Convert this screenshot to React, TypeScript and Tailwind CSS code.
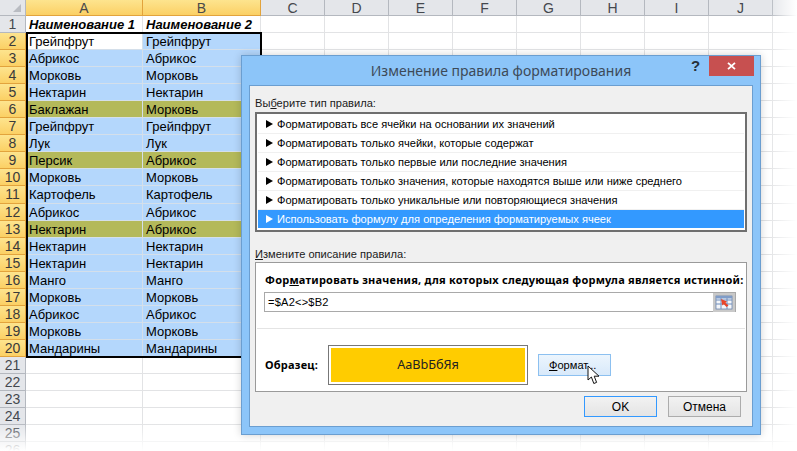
import React from "react";

const rowsData: [string, string, boolean][] = [
  ["Грейпфрут", "Грейпфрут", false],
  ["Абрикос", "Абрикос", false],
  ["Морковь", "Морковь", false],
  ["Нектарин", "Нектарин", false],
  ["Баклажан", "Морковь", true],
  ["Грейпфрут", "Грейпфрут", false],
  ["Лук", "Лук", false],
  ["Персик", "Абрикос", true],
  ["Морковь", "Морковь", false],
  ["Картофель", "Картофель", false],
  ["Абрикос", "Абрикос", false],
  ["Нектарин", "Абрикос", true],
  ["Нектарин", "Нектарин", false],
  ["Нектарин", "Нектарин", false],
  ["Манго", "Манго", false],
  ["Морковь", "Морковь", false],
  ["Абрикос", "Абрикос", false],
  ["Морковь", "Морковь", false],
  ["Мандарины", "Мандарины", false],
];

const plainCols = ["C", "D", "E", "F", "G", "H", "I", "J"];
const ruleRows = [
  "Форматировать все ячейки на основании их значений",
  "Форматировать только ячейки, которые содержат",
  "Форматировать только первые или последние значения",
  "Форматировать только значения, которые находятся выше или ниже среднего",
  "Форматировать только уникальные или повторяющиеся значения",
];

function RowHead({ n, active }: { n: number; active: boolean }) {
  return (
    <div
      className={
        active
          ? "h-full w-[26px] shrink-0 border-r border-b border-[#e2a33c] bg-gradient-to-b from-[#fde48e] to-[#fbd064] text-center text-[14px] leading-[17px] text-[#3a3a3a]"
          : "h-full w-[26px] shrink-0 border-r border-b border-[#b4b8bf] bg-[#e4e6ea] text-center text-[14px] leading-[17px] text-[#44484e]"
      }
    >
      {n}
    </div>
  );
}

function PlainCells() {
  return (
    <>
      {plainCols.map((c) => (
        <div key={c} className="h-full w-[64px] shrink-0 border-r border-b border-[#e2e3e5]" />
      ))}
      <div className="h-full flex-1 border-b border-[#e2e3e5]" />
    </>
  );
}

function Sheet() {
  return (
    <div className="flex h-[451px] w-[797px] flex-col overflow-hidden bg-white font-['Liberation_Sans',sans-serif]">
      <div className="flex h-[16px] shrink-0">
        <div className="relative h-full w-[26px] shrink-0 border-r border-b border-[#b4b8bf] bg-[#e4e6ea]">
          <div className="absolute right-[4px] bottom-[3px] h-0 w-0 border-b-[8px] border-l-[8px] border-b-[#b9bcc2] border-l-transparent" />
        </div>
        <div className="h-full w-[117px] shrink-0 border-r border-b border-[#e2a33c] bg-gradient-to-b from-[#fde48e] to-[#fbd064] text-center text-[14px] leading-[16px] text-[#4a4a4a]">A</div>
        <div className="h-full w-[118px] shrink-0 border-r border-b border-[#e2a33c] bg-gradient-to-b from-[#fde48e] to-[#fbd064] text-center text-[14px] leading-[16px] text-[#4a4a4a]">B</div>
        {plainCols.map((c) => (
          <div key={c} className="h-full w-[64px] shrink-0 border-r border-b border-[#b4b8bf] bg-[#e4e6ea] text-center text-[14px] leading-[16px] text-[#44484e]">{c}</div>
        ))}
        <div className="h-full flex-1 border-b border-[#b4b8bf] bg-[#e4e6ea]" />
      </div>

      <div className="flex h-[17.05px] shrink-0">
        <RowHead n={1} active={false} />
        <div className="h-full w-[117px] shrink-0 border-r border-[#e2e3e5] pl-[3px] text-[13px] leading-[18px] font-bold text-black italic">Наименование 1</div>
        <div className="h-full w-[118px] shrink-0 border-r border-[#e2e3e5] pl-[3px] text-[13px] leading-[18px] font-bold text-black italic">Наименование 2</div>
        <PlainCells />
      </div>

      {rowsData.map(([a, b, hit], i) => {
        const bg = hit ? "bg-[#b4b95a]" : "bg-[#b4d7fc]";
        return (
          <div key={i} className="flex h-[17.05px] shrink-0">
            <RowHead n={i + 2} active />
            <div
              className={
                (i === 0 ? "bg-white" : bg) +
                " h-full w-[117px] shrink-0 border-r border-b border-[#d4dfea] pl-[3px] text-[13px] leading-[18px] text-black"
              }
            >
              {a}
            </div>
            <div className={bg + " h-full w-[118px] shrink-0 border-r border-b border-[#d4dfea] pl-[3px] text-[13px] leading-[18px] text-black"}>{b}</div>
            <PlainCells />
          </div>
        );
      })}

      {[21, 22, 23, 24, 25, 26].map((n) => (
        <div key={n} className="flex h-[17.05px] shrink-0">
          <RowHead n={n} active={false} />
          <div className="h-full w-[117px] shrink-0 border-r border-b border-[#e2e3e5]" />
          <div className="h-full w-[118px] shrink-0 border-r border-b border-[#e2e3e5]" />
          <PlainCells />
        </div>
      ))}
    </div>
  );
}

function PickerIcon() {
  return (
    <svg width="22" height="19" viewBox="0 0 22 19">
      <rect x="0" y="0" width="22" height="19" fill="#c9c9c9" />
      <rect x="3" y="3" width="16" height="13" fill="#f4f6f9" stroke="#5a78a8" strokeWidth="0.7" />
      <path d="M3 7H19M3 11H19M8 3V16M14 3V16" stroke="#6c8cbc" strokeWidth="1" />
      <path d="M3 3H19V5.5H3Z" fill="#7f9cc8" />
      <path d="M8 6L14 8.5L12.5 9.7L15.5 12.5L13.5 14L10.8 11.2L9.3 12.5Z" fill="#e8452a" />
    </svg>
  );
}

function Arrow({ color }: { color: string }) {
  return (
    <svg width="7" height="8" viewBox="0 0 7 8" className="shrink-0">
      <path d="M0 0L7 4L0 8Z" fill={color} />
    </svg>
  );
}

function Cursor() {
  return (
    <svg className="absolute top-[365px] left-[587px]" width="14" height="20" viewBox="0 0 14 20">
      <path d="M1 1V15L4.4 12L6.8 18.5L9.6 17.4L7.2 11.2H12Z" fill="#fff" stroke="#111" strokeWidth="1" strokeLinejoin="round" />
    </svg>
  );
}

function Dialog() {
  return (
    <div className="absolute top-[55px] left-[241px] flex h-[380px] w-[520px] flex-col border border-[#6b9ed0] bg-[#8cc5f9] px-[7px] pb-[7px] font-['Liberation_Sans',sans-serif] shadow-[0_0_8px_rgba(0,0,0,0.18)]">
      <div className="relative flex h-[29px] shrink-0 items-center justify-center pb-[1px] font-['Noto_Sans',sans-serif] text-[14px] text-[#3d4a58]">
        Изменение правила форматирования
        <span className="absolute top-[1px] left-[442px] font-['Liberation_Sans',sans-serif] text-[15px] leading-[18px] font-bold text-[#26303a]">?</span>
        <div className="absolute top-0 right-[-1px] flex h-[20px] w-[45px] items-center justify-center bg-[#c75050]">
          <svg width="9" height="8" viewBox="0 0 9 8">
            <path d="M1 0.8L8 7.2M8 0.8L1 7.2" stroke="#fff" strokeWidth="1.8" />
          </svg>
        </div>
      </div>

      <div className="flex flex-1 flex-col border border-[#6b9ed0] bg-[#f0f0f0] px-[5px] text-[11.1px] text-[#1a1a1a]">
        <div className="mt-[9px] h-[17px] leading-[17px]">
          Вы<span className="underline">б</span>ерите тип правила:
        </div>
        <div className="flex h-[120px] flex-col border-2 border-[#6f6f6f] bg-white px-[1px] pt-[1px]">
          {ruleRows.map((r) => (
            <div key={r} className="flex h-[19px] shrink-0 items-center gap-[4px] border-b border-[#f0f0f0] pl-[8px] text-black">
              <Arrow color="#000" />
              <span className="pt-[1px]">{r}</span>
            </div>
          ))}
          <div className="flex h-[18px] shrink-0 items-center gap-[4px] bg-[#3399ff] pl-[8px] text-white">
            <Arrow color="#fff" />
            <span className="pt-[1px]">Использовать формулу для определения форматируемых ячеек</span>
          </div>
        </div>

        <div className="mt-[14px] h-[16px] leading-[16px]">
          <span className="underline">И</span>змените описание правила:
        </div>
        <div className="flex h-[130px] flex-col border border-[#9a9a9a] bg-white px-[1px]">
          <div className="mt-[8px] h-[17px] pl-[8px] font-['Noto_Sans',sans-serif] text-[11px] leading-[17px] font-bold tracking-[0.22px] text-black">
            Фор<span className="underline">м</span>атировать значения, для которых следующая формула является истинной:
          </div>
          <div className="mt-[4px] ml-[7px] flex h-[20px] w-[472px] items-center justify-between border border-[#a9a9a9] pl-[3px] text-black">
            <span className="pt-[1px] tracking-[0.2px]">=$A2&lt;&gt;$B2</span>
            <PickerIcon />
          </div>
          <div className="mt-[16px] h-px bg-[#e4e4e4]" />
          <div className="mt-[16px] flex items-center pl-[8px]">
            <span className="w-[63px] font-['Noto_Sans',sans-serif] text-[11px] font-bold tracking-[0.22px] text-black">Образец:</span>
            <div className="flex h-[40px] w-[200px] items-center justify-center border border-[#777777] bg-white p-[2px]">
              <div className="flex h-full w-full items-center justify-center bg-[#ffcc00] font-['Noto_Sans',sans-serif] text-[12.7px] text-[#222]">АаВbБбЯя</div>
            </div>
            <div className="ml-[10px] flex h-[22px] w-[73px] items-center border border-[#8cc0f0] bg-gradient-to-b from-[#ecf5fd] to-[#d8e9fa] pl-[10px] text-black">
              <span><span className="underline">Ф</span>ормат...</span>
            </div>
          </div>
        </div>

        <div className="mt-[4px] flex justify-end gap-[11px] pr-[6px]">
          <div className="flex h-[21px] w-[73px] items-center justify-center border border-[#3399ff] bg-gradient-to-b from-[#f2f2f2] to-[#e4e4e4] text-[12px] text-black">OK</div>
          <div className="flex h-[21px] w-[73px] items-center justify-center border border-[#acacac] bg-gradient-to-b from-[#f2f2f2] to-[#e4e4e4] text-[12px] text-black">Отмена</div>
        </div>
      </div>
    </div>
  );
}

export default function App() {
  return (
    <div className="relative h-[451px] w-[797px] overflow-hidden bg-white">
      <Sheet />
      <div className="pointer-events-none absolute top-[32px] left-[26px] h-[326px] w-[236px] border-2 border-black" />
      <div className="pointer-events-none absolute bottom-0 left-0 h-[28px] w-full bg-gradient-to-b from-transparent to-white" />
      <div className="pointer-events-none absolute top-0 right-0 h-full w-[28px] bg-gradient-to-r from-transparent to-white" />
      <Dialog />
      <Cursor />
    </div>
  );
}
